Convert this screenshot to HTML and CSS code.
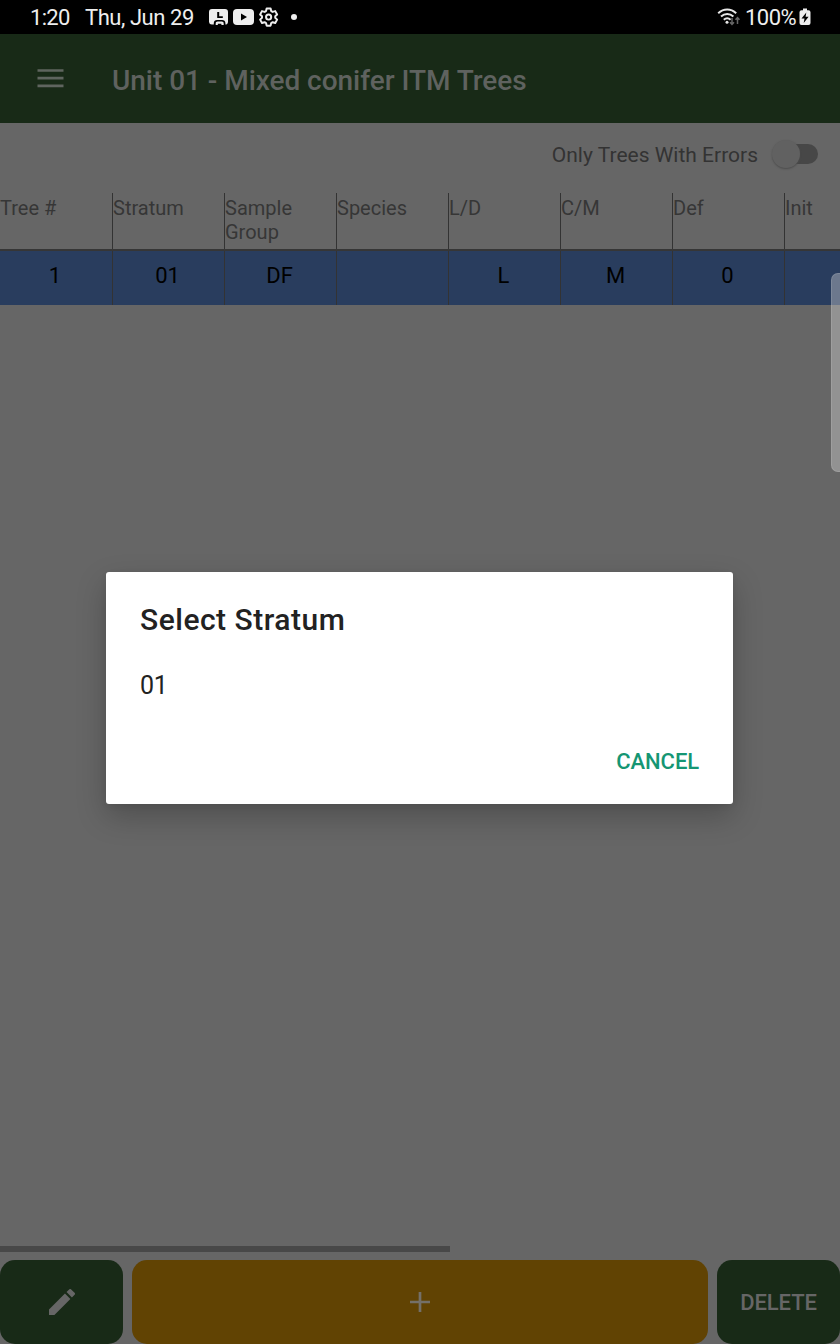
FILE: index.html
```html
<!DOCTYPE html>
<html lang="en">
<head>
<meta charset="utf-8">
<title>Unit 01 - Mixed conifer ITM Trees</title>
<link rel="stylesheet" href="styles.css">
</head>
<body>
<div class="screen">
  <header class="status">
    <span class="clock">1:20</span>
    <span class="date">Thu, Jun 29</span>
    <svg class="notifications" width="92" height="22" viewBox="0 0 92 22">
      <path fill="#eee" fill-rule="evenodd" d="M4 3h13a3 3 0 0 1 3 3v10a3 3 0 0 1-1.600 2.600h-1V17c0-1.800-1.400-3-3.200-3H9c-1.800 0-3.200 1.200-3.200 3v1.600h-2A3 3 0 0 1 1 16V6a3 3 0 0 1 3-3zM9.200 6v6h5.600v-1.800h-3.600V6z"/>
      <path fill="#eee" d="M7.700 19v-1.500c0-1.200.8-1.900 1.900-1.900h4.200c1.100 0 1.900.7 1.900 1.900V19h-2.300v-1.200h-3.600V19z"/>
      <rect x="25" y="3" width="21" height="16" rx="4" fill="#eee"/>
      <path d="M33 7.500v7l6-3.500z" fill="#000"/>
      <g transform="translate(50.300 .3) scale(.86)" fill="none" stroke="#eee" stroke-width="2.300">
        <path stroke-linejoin="round" d="M9.700 2.500h4.600l.7 3 1.700 1 3-.9 2.200 3.900-2.200 2.100v1.800l2.200 2.100-2.200 3.900-3-.9-1.700 1-.7 3H9.700l-.7-3-1.700-1-3 .9-2.200-3.900 2.200-2.100v-1.800L2.100 9.500l2.200-3.900 3 .9 1.700-1z"/>
        <circle cx="12" cy="12.500" r="3"/>
      </g>
      <circle cx="86" cy="11" r="3" fill="#eee"/>
    </svg>
    <svg class="wifi" width="24" height="20" viewBox="0 0 24 20">
      <g fill="none" stroke="#e6e6e6" stroke-width="2">
        <path d="M1.200 6.200c5.400-5 12.600-5 18 0"/>
        <path d="M4 9.600c3.700-3.400 8.700-3.400 12.400 0"/>
        <path d="M6.800 12.800c2.100-1.900 4.700-1.900 6.800 0"/>
      </g>
      <circle cx="10" cy="15.300" r="1.500" fill="#e6e6e6"/>
      <g fill="none" stroke="#666" stroke-width="1.500"><path d="M15 11v6.500m-2-2.200 2 2.200 2-2.200M20.500 17v-6.500m-2 2.200 2-2.200 2 2.200"/></g>
    </svg>
    <span class="percent">100%</span>
    <svg class="battery" width="12" height="18" viewBox="0 0 12 18">
      <path fill="#eee" d="M4 .5h4v1.800h1.500A2 2 0 0 1 11.500 4.300V15a2 2 0 0 1-2 2h-7a2 2 0 0 1-2-2V4.300a2 2 0 0 1 2-2H4z"/>
      <path fill="#000" d="M7.300 4.500 2.500 10.500h3L4.700 15l4.900-6.200h-3z"/>
    </svg>
  </header>

  <div class="appbar">
    <svg class="menu" width="28" height="20" viewBox="0 0 28 20"><path d="M.5 1.500h26M.5 9.200h26M.5 16.900h26" stroke="#5f655f" stroke-width="2.700"/></svg>
    <h1 class="title">Unit 01 - Mixed conifer ITM Trees</h1>
  </div>

  <main class="content">
    <div class="filter">
      <span class="filter-label">Only Trees With Errors</span>
      <span class="switch"><span class="track"></span><span class="thumb"></span></span>
    </div>
    <div class="grid head">
      <div>Tree #</div><div>Stratum</div><div>Sample Group</div><div>Species</div><div>L/D</div><div>C/M</div><div>Def</div><div>Init</div>
    </div>
    <div class="grid row">
      <div>1</div><div>01</div><div>DF</div><div></div><div>L</div><div>M</div><div>0</div><div></div>
    </div>
  </main>

  <div class="scrollbar"></div>
  <footer class="actions">
    <div class="button">
      <svg class="pencil" width="26" height="26" viewBox="3 2.990 18.020 18.020"><path fill="#666" d="M3 17.250V21h3.750L17.810 9.940l-3.750-3.750L3 17.250zM20.710 7.040a1 1 0 0 0 0-1.410l-2.340-2.340a1 1 0 0 0-1.410 0l-1.830 1.830 3.750 3.750 1.830-1.830z"/></svg>
    </div>
    <div class="button add"><svg width="20" height="20" viewBox="0 0 20 20"><path d="M10 0v20M0 10h20" stroke="#747069" stroke-width="2.700"/></svg></div>
    <div class="button delete">DELETE</div>
  </footer>

  <div class="edge-handle"></div>
  <section class="dialog">
    <h2 class="dialog-title">Select Stratum</h2>
    <div class="option">01</div>
    <div class="cancel">CANCEL</div>
  </section>
</div>
</body>
</html>
```
FILE: styles.css
```css
* { box-sizing: border-box; }
body { margin: 0; font-family: Roboto, sans-serif; }
.screen {
  position: relative;
  width: 840px;
  height: 1344px;
  overflow: hidden;
  display: flex;
  flex-direction: column;
  background: #666;
}
.status {
  height: 34px;
  flex: none;
  display: flex;
  align-items: center;
  padding: 0 29px 0 30px;
  background: #000;
  color: #eee;
  font-size: 22px;
  line-height: 35px;
}
.clock { width: 55px; letter-spacing: -.7px; }
.date { width: 123px; white-space: nowrap; letter-spacing: -.45px; }
.wifi { margin-left: auto; margin-right: 4px; }
.percent { width: 54px; letter-spacing: -.5px; }
.appbar {
  height: 89px;
  flex: none;
  display: flex;
  align-items: center;
  padding-left: 37px;
  background: #182a17;
}
.menu { width: 28px; margin-right: 47px; }
.title {
  margin: 5px 0 0;
  color: #5f625f;
  font-size: 28px;
  font-weight: 500;
  line-height: 34px;
  letter-spacing: -.04px;
}
.content { flex: 1; }
.filter {
  height: 70px;
  display: flex;
  align-items: flex-start;
  justify-content: flex-end;
  padding: 15px 21px 0 0;
}
.filter-label {
  margin-right: 13px;
  color: #333;
  font-size: 21px;
  line-height: 34px;
}
.switch { position: relative; width: 48px; height: 34px; }
.track {
  position: absolute;
  left: 7px;
  top: 6px;
  width: 40px;
  height: 20px;
  border-radius: 10px;
  background: #474747;
}
.thumb {
  position: absolute;
  left: 1px;
  top: 2px;
  width: 28px;
  height: 28px;
  border-radius: 50%;
  background: #616161;
  box-shadow: 0 1px 2px #4c4c4c;
}
.grid {
  display: grid;
  grid-template-columns: repeat(8, 112px);
  width: 840px;
  overflow: hidden;
}
.grid > div + div { border-left: 1px solid #333; }
.head {
  height: 58px;
  border-bottom: 2px solid #363636;
  color: #363636;
  font-size: 20px;
  line-height: 24px;
}
.head > div { padding-top: 3px; }
.row {
  height: 54px;
  background: #293d5e;
  color: #000;
  font-size: 22px;
  line-height: 49px;
  text-align: center;
}
.row > div { padding-right: 2px; }
.scrollbar { flex: none; width: 450px; height: 6px; margin-bottom: 8px; background: #484848; }
.actions {
  height: 84px;
  flex: none;
  display: grid;
  grid-template-columns: 123px 576px 123px;
  column-gap: 9px;
}
.button {
  display: flex;
  align-items: center;
  justify-content: center;
  border-radius: 15px;
  background: #182a17;
  color: #666;
  font-size: 22px;
  font-weight: 500;
}
.pencil { margin-left: 1px; }
.delete { padding-top: 1px; letter-spacing: -.1px; }
.add { background: #614303; }
.edge-handle {
  position: absolute;
  left: 831px;
  top: 273px;
  width: 18px;
  height: 199px;
  border: 1px solid rgba(255, 255, 255, .12);
  border-radius: 7px;
  background: rgba(218, 218, 218, .38);
}
.dialog {
  position: absolute;
  left: 106px;
  top: 572px;
  width: 627px;
  height: 232px;
  padding: 28px 34px 0;
  border-radius: 3px;
  background: #fff;
  color: #222;
  box-shadow: 0 12px 30px rgba(0, 0, 0, .23), 0 2px 6px rgba(0, 0, 0, .06);
}
.dialog-title { margin: 0; font-size: 30px; font-weight: 500; line-height: 40px; letter-spacing: .5px; }
.option { margin-top: 29px; font-size: 25px; line-height: 34px; letter-spacing: -.4px; }
.cancel {
  margin-top: 42px;
  color: #159673;
  font-size: 22px;
  font-weight: 500;
  line-height: 34px;
  letter-spacing: -.1px;
  text-align: right;
}
```
